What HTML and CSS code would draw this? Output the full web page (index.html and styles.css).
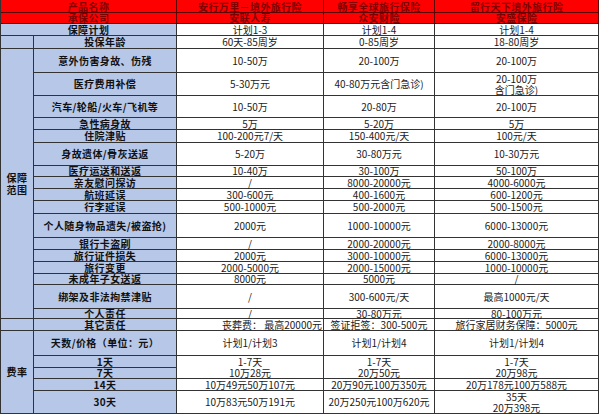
FILE: index.html
```html
<!DOCTYPE html>
<html lang="zh-CN">
<head>
<meta charset="utf-8">
<title>境外旅行险对比</title>
<link rel="stylesheet" href="styles.css">
</head>
<body>
<div class="sheet">
  <div class="c hd first span2">产品名称</div><div class="c hd first">安行万里－境外旅行险</div><div class="c hd first">畅享全球旅行保险</div><div class="c hd first">留行天下境外旅行险</div>
  <div class="c hd span2">承保公司</div><div class="c hd">安联人寿</div><div class="c hd">众安财险</div><div class="c hd">安盛保险</div>
  <div class="c lb span2">保障计划</div><div class="c">计划1-3</div><div class="c">计划1-4</div><div class="c">计划1-4</div>
  <div class="c lb"></div><div class="c lb">投保年龄</div><div class="c">60天-85周岁</div><div class="c">0-85周岁</div><div class="c">18-80周岁</div>
  <div class="c lb grp g1">保障<br>范围</div><div class="c lb">意外伤害身故、伤残</div><div class="c">10-50万</div><div class="c">20-100万</div><div class="c">20-100万</div>
  <div class="c lb">医疗费用补偿</div><div class="c">5-30万元</div><div class="c">40-80万元含门急诊)</div><div class="c two">20-100万<br>含门急诊)</div>
  <div class="c lb">汽车/轮船/火车/飞机等</div><div class="c">10-50万</div><div class="c">20-80万</div><div class="c">20-100万</div>
  <div class="c lb">急性病身故</div><div class="c">5万</div><div class="c">5-20万</div><div class="c">5万</div>
  <div class="c lb">住院津贴</div><div class="c">100-200元7/天</div><div class="c">150-400元/天</div><div class="c">100元/天</div>
  <div class="c lb">身故遗体/骨灰送返</div><div class="c">5-20万</div><div class="c">30-80万元</div><div class="c">10-30万元</div>
  <div class="c lb">医疗运送和送返</div><div class="c">10-40万</div><div class="c">30-100万</div><div class="c">50-100万</div>
  <div class="c lb">亲友慰问探访</div><div class="c">/</div><div class="c">8000-20000元</div><div class="c">4000-6000元</div>
  <div class="c lb">航班延误</div><div class="c">300-600元</div><div class="c">400-1600元</div><div class="c">600-1200元</div>
  <div class="c lb">行李延误</div><div class="c">500-1000元</div><div class="c">500-2000元</div><div class="c">500-1500元</div>
  <div class="c lb">个人随身物品遗失/被盗抢)</div><div class="c">2000元</div><div class="c">1000-10000元</div><div class="c">6000-13000元</div>
  <div class="c lb">银行卡盗刷</div><div class="c">/</div><div class="c">2000-20000元</div><div class="c">2000-8000元</div>
  <div class="c lb">旅行证件损失</div><div class="c">2000元</div><div class="c">3000-10000元</div><div class="c">6000-13000元</div>
  <div class="c lb">旅行变更</div><div class="c">2000-5000元</div><div class="c">2000-15000元</div><div class="c">1000-10000元</div>
  <div class="c lb">未成年子女送返</div><div class="c">8000元</div><div class="c">5000元</div><div class="c">/</div>
  <div class="c lb">绑架及非法拘禁津贴</div><div class="c">/</div><div class="c">300-600元/天</div><div class="c">最高1000元/天</div>
  <div class="c lb">个人责任</div><div class="c">/</div><div class="c">30-80万元</div><div class="c">80-100万元</div>
  <div class="c lb"></div><div class="c lb">其它责任</div><div class="c right">丧葬费：&nbsp;最高20000元</div><div class="c">签证拒签：300-500元</div><div class="c">旅行家居财务保障：5000元</div>
  <div class="c lb grp g2">费率</div><div class="c lb">天数/价格（单位：元）</div><div class="c">计划1/计划3</div><div class="c">计划1/计划4</div><div class="c">计划1/计划4</div>
  <div class="c lb">1天</div><div class="c tall two">1-7天<br>10万28元</div><div class="c tall two">1-7天<br>20万50元</div><div class="c tall two">1-7天<br>20万98元</div>
  <div class="c lb">7天</div>
  <div class="c lb">14天</div><div class="c">10万49元50万107元</div><div class="c">20万90元100万350元</div><div class="c">20万178元100万588元</div>
  <div class="c lb">30天</div><div class="c">10万83元50万191元</div><div class="c">20万250元100万620元</div><div class="c two">35天<br>20万398元</div>
</div>
</body>
</html>
```

FILE: styles.css
```css
html, body {
  margin: 0;
  padding: 0;
  background: #ffffff;
}

.sheet {
  display: grid;
  width: 599px;
  grid-template-columns: 33px 143px 147px 111px 164px;
  grid-template-rows: 13px 11px 12px 13px 24px 23px 22px 12px 13px 23px 11px 12px 12px 13px 24px 12px 12px 12px 11px 24px 10px 12px 25px 12px 11px 12px 23px;
  border-left: 1px solid #333;
  font-family: "Noto Sans CJK SC", "Noto Sans", sans-serif;
  font-size: 10px;
  line-height: 10px;
  color: #1a1a1a;
}

.c {
  box-sizing: border-box;
  display: flex;
  align-items: center;
  justify-content: center;
  text-align: center;
  white-space: nowrap;
  border-right: 1px solid #333;
  border-bottom: 1px solid #333;
  background: #ffffff;
}

.two {
  line-height: 11px;
}

.first {
  padding-top: 2px;
}

.hd {
  background: #ff0000;
  color: #800000;
  font-weight: 700;
  letter-spacing: 0.4px;
  border-color: #5a0000;
}

.lb {
  background: #b7c7e7;
  color: #111;
  font-weight: 700;
  letter-spacing: 0.4px;
}

.grp {
  line-height: 12px;
}

.span2 {
  grid-column: span 2;
}

.g1 {
  grid-row: span 17;
}

.g2 {
  grid-row: span 5;
}

.tall {
  grid-row: span 2;
}

.right {
  justify-content: flex-end;
  padding-right: 1px;
}
```
